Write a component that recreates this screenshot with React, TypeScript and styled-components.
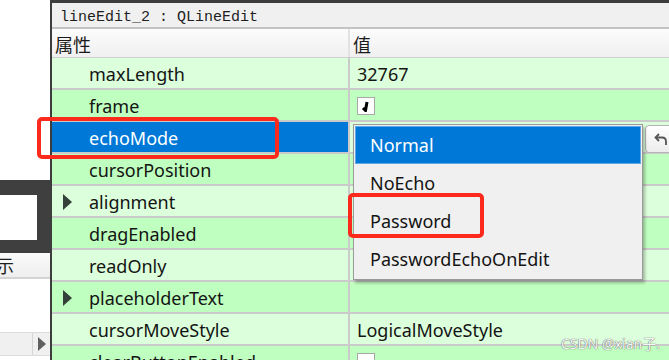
import styled, { createGlobalStyle } from 'styled-components';

const GlobalStyle = createGlobalStyle`
  html, body {
    margin: 0;
    padding: 0;
    background: #ffffff;
    overflow: hidden;
  }
  body {
    font-family: "Noto Sans", "Noto Sans CJK SC", sans-serif;
  }
`;

const Page = styled.div`
  position: relative;
  display: flex;
  width: 669px;
  height: 360px;
  overflow: hidden;
  background: #ffffff;
`;

// left panel (partly visible)
const Sidebar = styled.div`
  width: 50px;
  flex-shrink: 0;
  display: flex;
  flex-direction: column;
  border-right: 2px solid #3d3d3d;
`;

const SideBlank = styled.div<{ $h: number }>`
  height: ${p => p.$h}px;
  flex-shrink: 0;
  background: #ffffff;
`;

const DarkBand = styled.div`
  height: 73px;
  flex-shrink: 0;
  background: #3f3f3f;
  padding-top: 15px;
  box-sizing: border-box;
`;

const InnerWhite = styled.div`
  width: 37px;
  height: 45px;
  background: #ffffff;
`;

const SideHeader = styled.div`
  height: 26px;
  flex-shrink: 0;
  box-sizing: border-box;
  background: linear-gradient(#fbfbfb, #eeeeee);
  border-bottom: 2px solid #d4d4d4;
  font-family: "Noto Sans CJK SC", sans-serif;
  font-size: 18px;
  line-height: 25px;
  color: #1e1e1e;
  overflow: hidden;
  white-space: nowrap;
  text-indent: -4px;
`;

const SideBody = styled.div`
  flex: 1;
  background: #ffffff;
`;

const HScroll = styled.div`
  height: 22px;
  flex-shrink: 0;
  display: flex;
  justify-content: flex-end;
  background: #f0f0f0;
  border-top: 1px solid #dcdcdc;
  border-bottom: 1px solid #dcdcdc;
`;

const ScrollArrow = styled.div`
  width: 17px;
  border-left: 1px solid #d6d6d6;
  display: flex;
  align-items: center;
  justify-content: center;
  &::after {
    content: '';
    border-left: 8px solid #606060;
    border-top: 7px solid transparent;
    border-bottom: 7px solid transparent;
  }
`;

// property editor
const Editor = styled.div`
  flex: 1;
  display: flex;
  flex-direction: column;
  min-width: 0;
`;

const TopStrip = styled.div`
  height: 3px;
  flex-shrink: 0;
  background: #3d3d3d;
`;

const TitleBar = styled.div`
  height: 26px;
  flex-shrink: 0;
  box-sizing: border-box;
  background: #f0f0f0;
  border-bottom: 2px solid #c4c4c4;
  padding: 2px 0 0 8px;
  font-family: "Liberation Mono", monospace;
  font-size: 15px;
  line-height: 25px;
  color: #1e1e1e;
  white-space: nowrap;
`;

const Grid = styled.div`
  display: grid;
  grid-template-columns: 298px 1fr;
`;

const HeaderRow = styled(Grid)`
  height: 29px;
  flex-shrink: 0;
  box-sizing: border-box;
  background: linear-gradient(#fcfcfc, #f0f0f0);
  border-bottom: 1px solid #cfcfcf;
`;

const HeaderCell = styled.div<{ $divider?: boolean }>`
  padding: 2px 0 0 3px;
  font-family: "Noto Sans CJK SC", sans-serif;
  font-size: 18px;
  line-height: 26px;
  color: #1a1a1a;
  border-right: ${p => (p.$divider ? '2px solid #e2e2e2' : 'none')};
`;

const Row = styled(Grid)<{ $tone: 'light' | 'dark' }>`
  height: 32px;
  flex-shrink: 0;
  box-sizing: border-box;
  background: ${p => (p.$tone === 'light' ? '#dcffdc' : '#bfffbf')};
  border-bottom: 2px solid #cacaca;
`;

const NameCell = styled.div<{ $selected?: boolean }>`
  position: relative;
  padding: 2px 0 0 37px;
  font-size: 18px;
  line-height: 28px;
  color: ${p => (p.$selected ? '#ffffff' : '#141414')};
  background: ${p => (p.$selected ? '#0078d7' : 'transparent')};
  border-right: 2px solid #cacaca;
  white-space: nowrap;
`;

const Expander = styled.span`
  position: absolute;
  left: 11px;
  top: 8px;
  border-left: 9px solid #34413a;
  border-top: 8px solid transparent;
  border-bottom: 8px solid transparent;
`;

const ValueCell = styled.div`
  display: flex;
  align-items: center;
  padding: 2px 0 0 7px;
  font-size: 18px;
  line-height: 28px;
  color: #141414;
  white-space: nowrap;
`;

const CheckBox = styled.span`
  width: 18px;
  height: 18px;
  box-sizing: border-box;
  display: inline-flex;
  align-items: center;
  justify-content: center;
  background: #ffffff;
  border: 1px solid #a8a8a8;
`;

// overlays
const Mark = styled.div<{ $x: number; $y: number; $w: number; $h: number }>`
  position: absolute;
  left: ${p => p.$x}px;
  top: ${p => p.$y}px;
  width: ${p => p.$w}px;
  height: ${p => p.$h}px;
  box-sizing: border-box;
  border: 4px solid #fb2a1c;
  border-radius: 5px;
  z-index: 5;
`;

const Dropdown = styled.div`
  position: absolute;
  left: 353px;
  top: 124px;
  width: 290px;
  height: 156px;
  box-sizing: border-box;
  padding: 1px;
  background: #f0f0f0;
  border: 1px solid #9a9a9a;
  box-shadow: 2px 3px 3px rgba(0, 0, 0, 0.28);
  z-index: 3;
`;

const Option = styled.div<{ $active?: boolean }>`
  height: 38px;
  box-sizing: border-box;
  padding-left: 14px;
  font-size: 18px;
  line-height: 36px;
  color: ${p => (p.$active ? '#ffffff' : '#141414')};
  background: ${p => (p.$active ? '#0078d7' : 'transparent')};
  border: 1px solid ${p => (p.$active ? '#5fa8e8' : 'transparent')};
`;

const ResetButton = styled.div`
  position: absolute;
  left: 645px;
  top: 125px;
  width: 32px;
  height: 28px;
  box-sizing: border-box;
  display: flex;
  align-items: center;
  padding-left: 8px;
  background: linear-gradient(#ffffff, #ececec);
  border: 1px solid #b4b4b4;
  border-radius: 4px;
  z-index: 2;
`;

const Watermark = styled.div`
  position: absolute;
  left: 561px;
  top: 333px;
  font-family: "Noto Sans", "Noto Sans CJK SC", sans-serif;
  font-size: 14px;
  color: #f6f6f6;
  text-shadow: 0 0 1px #6a6a6a, 0 0 1px #6a6a6a;
  white-space: nowrap;
  z-index: 6;
`;

type Prop = {
  name: string;
  value?: string;
  check?: 'on' | 'off';
  group?: boolean;
  selected?: boolean;
};

const props: Prop[] = [
  { name: 'maxLength', value: '32767' },
  { name: 'frame', check: 'on' },
  { name: 'echoMode', selected: true },
  { name: 'cursorPosition' },
  { name: 'alignment', group: true },
  { name: 'dragEnabled' },
  { name: 'readOnly' },
  { name: 'placeholderText', group: true },
  { name: 'cursorMoveStyle', value: 'LogicalMoveStyle' },
  { name: 'clearButtonEnabled', check: 'off' },
];

const options = ['Normal', 'NoEcho', 'Password', 'PasswordEchoOnEdit'];

const App = () => {
  return (
    <Page>
      <GlobalStyle />
      <Sidebar>
        <SideBlank $h={180} />
        <DarkBand>
          <InnerWhite />
        </DarkBand>
        <SideHeader>示</SideHeader>
        <SideBody />
        <HScroll>
          <ScrollArrow />
        </HScroll>
        <SideBlank $h={4} />
      </Sidebar>

      <Editor>
        <TopStrip />
        <TitleBar>lineEdit_2 : QLineEdit</TitleBar>
        <HeaderRow>
          <HeaderCell $divider>属性</HeaderCell>
          <HeaderCell>值</HeaderCell>
        </HeaderRow>
        {props.map((p, i) => (
          <Row key={p.name} $tone={i % 2 === 0 ? 'light' : 'dark'}>
            <NameCell $selected={p.selected}>
              {p.group && <Expander />}
              {p.name}
            </NameCell>
            <ValueCell>
              {p.value}
              {p.check && (
                <CheckBox>
                  {p.check === 'on' && (
                    <svg width="10" height="12" viewBox="0 0 10 12">
                      <path d="M2 8 L4.5 10.5 L6 2" fill="none" stroke="#000" strokeWidth="3" />
                    </svg>
                  )}
                </CheckBox>
              )}
            </ValueCell>
          </Row>
        ))}
      </Editor>

      <Dropdown>
        {options.map((o, i) => (
          <Option key={o} $active={i === 0}>
            {o}
          </Option>
        ))}
      </Dropdown>

      <ResetButton>
        <svg width="14" height="14" viewBox="0 0 14 14">
          <path d="M5 2 L1.5 5.5 L5 9" fill="none" stroke="#555" strokeWidth="1.8" />
          <path d="M2 5.5 H8 Q12 5.5 12 9.5 V13" fill="none" stroke="#555" strokeWidth="1.8" />
        </svg>
      </ResetButton>

      <Mark $x={37} $y={117} $w={242} $h={42} />
      <Mark $x={348} $y={193} $w={136} $h={45} />

      <Watermark>CSDN @xian子.</Watermark>
    </Page>
  );
};

export default App;
